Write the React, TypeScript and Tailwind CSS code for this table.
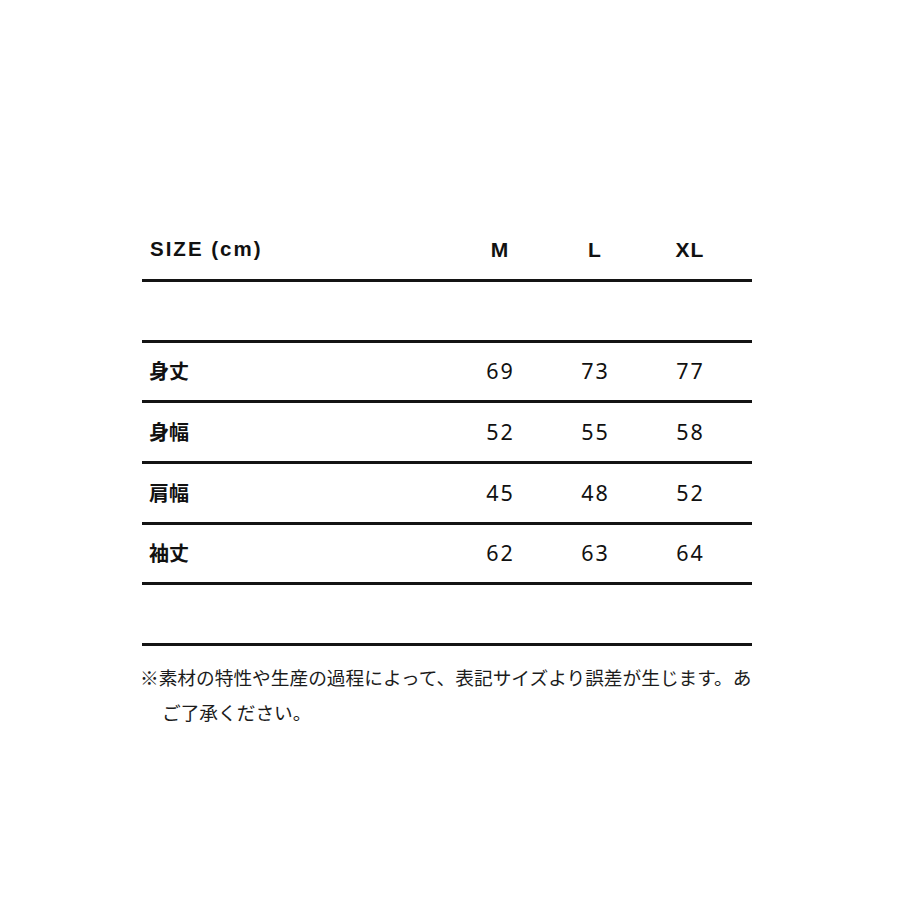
import React from "react";

const rows: [string, string, string, string][] = [
  ["身丈", "69", "73", "77"],
  ["身幅", "52", "55", "58"],
  ["肩幅", "45", "48", "52"],
  ["袖丈", "62", "63", "64"],
];

const latin = { fontFamily: '"Liberation Sans", Arial, sans-serif' };
const num = { fontFamily: '"Noto Sans", "Liberation Sans", sans-serif' };
const cjk = { fontFamily: '"Noto Sans CJK JP", "Noto Sans", sans-serif' };

export default function App() {
  return (
    <div className="w-[920px] h-[920px] bg-white overflow-hidden">
      <div className="ml-[142px] pt-[220px] w-[610px]">
        {/* header */}
        <div className="flex items-center h-[59px] text-[#111111]">
          <div className="w-[310px] pl-[8px] text-[20.5px] font-bold tracking-[2px]" style={latin}>
            SIZE (cm)
          </div>
          {["M", "L", "XL"].map((s) => (
            <div key={s} className="w-[95px] text-center pl-[1px] text-[21px] font-bold tracking-[1px]" style={latin}>
              {s}
            </div>
          ))}
        </div>
        <div className="border-t-[3px] border-[#141414]" />
        <div className="h-[57.67px]" />
        <div className="border-t-[3px] border-[#141414]" />
        {rows.map((r) => (
          <div key={r[0]}>
            <div className="flex items-center h-[57.67px] text-[#111111]">
              <div className="w-[310px] pl-[7px] text-[20px] font-bold" style={cjk}>
                {r[0]}
              </div>
              {r.slice(1).map((v, i) => (
                <div key={i} className="w-[95px] text-center pl-[2px] text-[21.5px] tracking-[2px]" style={num}>
                  {v}
                </div>
              ))}
            </div>
            <div className="border-t-[3px] border-[#141414]" />
          </div>
        ))}
        <div className="h-[57.67px]" />
        <div className="border-t-[3px] border-[#141414]" />
        <div className="mt-[13px] text-[18.7px] leading-[35px] text-[#1c1c1c]" style={cjk}>
          <div className="w-[614px] -ml-[2px] whitespace-nowrap overflow-hidden">
            ※素材の特性や生産の過程によって、表記サイズより誤差が生じます。あら
          </div>
          <div className="pl-[20px]">ご了承ください。</div>
        </div>
      </div>
    </div>
  );
}
